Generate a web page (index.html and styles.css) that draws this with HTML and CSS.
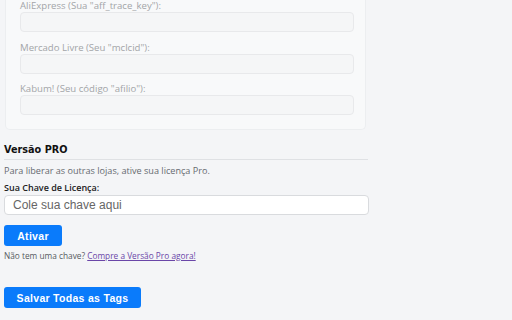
FILE: index.html
```html
<!DOCTYPE html>
<html lang="pt-BR">
<head>
<meta charset="utf-8">
<link rel="stylesheet" href="styles.css">
</head>
<body>
<div class="page">
  <div class="card">
    <div class="field">
      <label class="field-label">AliExpress (Sua "aff_trace_key"):</label>
      <input class="field-input" type="text" disabled>
    </div>
    <div class="field">
      <label class="field-label">Mercado Livre (Seu "mclcid"):</label>
      <input class="field-input" type="text" disabled>
    </div>
    <div class="field last">
      <label class="field-label">Kabum! (Seu código "afilio"):</label>
      <input class="field-input" type="text" disabled>
    </div>
  </div>

  <h3 class="pro-title">Versão PRO</h3>
  <p class="pro-desc">Para liberar as outras lojas, ative sua licença Pro.</p>
  <label class="key-label">Sua Chave de Licença:</label>
  <input class="key-input" type="text" placeholder="Cole sua chave aqui">
  <button class="btn btn-activate">Ativar</button>
  <p class="buy-text">Não tem uma chave? <a class="buy-link" href="#">Compre a Versão Pro agora!</a></p>
  <button class="btn btn-save">Salvar Todas as Tags</button>
</div>
</body>
</html>
```
FILE: styles.css
```css
html, body {
  margin: 0;
  padding: 0;
  background: #f4f5f7;
}
body {
  font-family: "Open Sans", "DejaVu Sans", sans-serif;
  overflow: hidden;
}
.page {
  width: 365px;
  padding: 0 4px;
  margin-top: -14px;
  display: flex;
  flex-direction: column;
  align-items: flex-start;
}
.card {
  box-sizing: border-box;
  width: 361px;
  margin-left: 1px;
  padding: 14px 11px 14px 14px;
  background: #f8f9fa;
  border: 1px solid #eceef0;
  border-top: none;
  border-radius: 0 0 5px 5px;
  display: flex;
  flex-direction: column;
  align-self: flex-start;
}
.field {
  display: flex;
  flex-direction: column;
  margin-bottom: 9.5px;
}
.field.last {
  margin-bottom: 0;
}
.field-label {
  font-size: 9.6px;
  line-height: 12px;
  color: #a3a5a8;
  margin-bottom: 0;
}
.field-input {
  box-sizing: border-box;
  width: 100%;
  height: 20px;
  margin: 0;
  background: #f5f6f7;
  border: 1px solid #e8e9eb;
  border-radius: 4px;
}
.pro-title {
  box-sizing: border-box;
  width: 364px;
  margin: 14px 0 0 0;
  padding-bottom: 3px;
  font-family: "DejaVu Sans", sans-serif;
  font-size: 9.7px;
  line-height: 12px;
  font-weight: bold;
  color: #111;
  border-bottom: 1px solid #dfe1e4;
}
.pro-desc {
  margin: 6px 0 0 0;
  font-size: 9.1px;
  line-height: 10px;
  color: #666a70;
}
.key-label {
  margin-top: 7px;
  font-size: 9px;
  line-height: 10px;
  font-weight: 600;
  color: #222;
}
.key-input {
  box-sizing: border-box;
  width: 365px;
  height: 20px;
  margin: 2px 0 0 0;
  padding: 0 8px;
  background: #fff;
  border: 1px solid #d9dbde;
  border-radius: 4px;
  font-family: "Liberation Sans", Arial, sans-serif;
  font-size: 12px;
}
.key-input::placeholder {
  color: #666;
}
.btn {
  box-sizing: border-box;
  height: 21px;
  margin: 0;
  border: none;
  border-radius: 3px;
  background: #0a7bfb;
  color: #fff;
  font-family: "Liberation Sans", Arial, sans-serif;
  font-weight: bold;
  font-size: 10.5px;
  letter-spacing: 0.3px;
  padding: 0;
}
.btn-activate {
  width: 58px;
  margin-top: 10px;
}
.btn-save {
  width: 137px;
  margin-top: 26px;
}
.buy-text {
  margin: 5px 0 0 0;
  font-size: 8.3px;
  line-height: 10px;
  color: #555a60;
}
.buy-link {
  color: #6a46a8;
  text-decoration: underline;
}
```
